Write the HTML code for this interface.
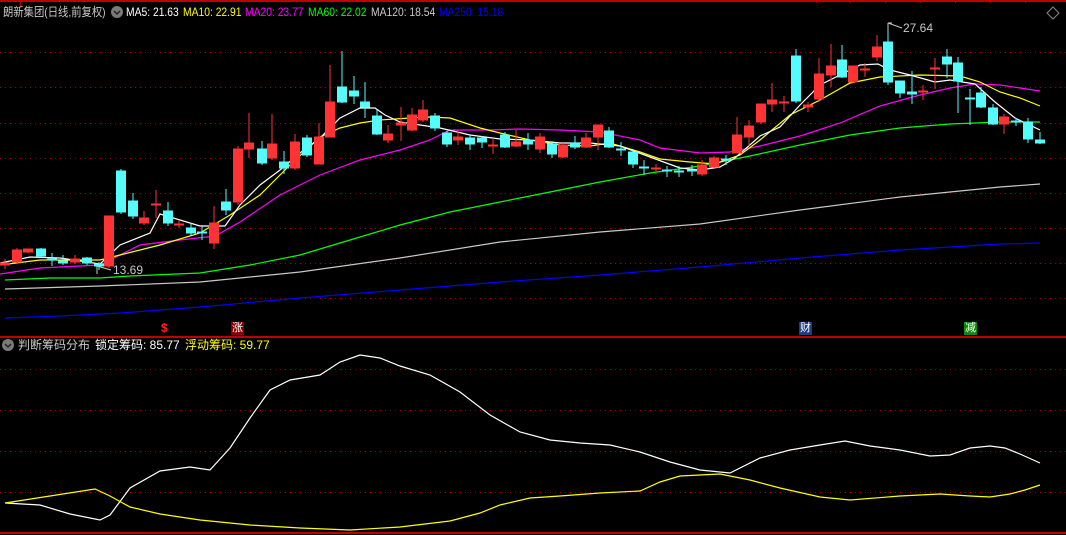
<!DOCTYPE html>
<html><head><meta charset="utf-8"><style>
html,body{margin:0;padding:0;background:#000;}
body{width:1066px;height:535px;overflow:hidden;position:relative;font-family:"Liberation Sans","Noto Sans CJK SC",sans-serif;}
.t{position:absolute;font-size:12px;line-height:14px;white-space:nowrap;}
.h{transform:scaleX(0.86);transform-origin:0 0;}
.m{position:absolute;font-size:11px;line-height:13px;color:#fff;text-align:center;width:13px;height:13px;}
</style></head><body>
<svg width="1066" height="535" style="position:absolute;left:0;top:0">
<g stroke="#a00000" stroke-width="1" stroke-dasharray="1,4">
<line x1="0" y1="52.5" x2="1066" y2="52.5"/><line x1="0" y1="87.5" x2="1066" y2="87.5"/><line x1="0" y1="123.5" x2="1066" y2="123.5"/><line x1="0" y1="158.5" x2="1066" y2="158.5"/><line x1="0" y1="193.5" x2="1066" y2="193.5"/><line x1="0" y1="228.5" x2="1066" y2="228.5"/><line x1="0" y1="263.5" x2="1066" y2="263.5"/><line x1="0" y1="298.5" x2="1066" y2="298.5"/>
<line x1="0" y1="369.5" x2="1066" y2="369.5"/><line x1="0" y1="410.5" x2="1066" y2="410.5"/><line x1="0" y1="451.5" x2="1066" y2="451.5"/><line x1="0" y1="492.5" x2="1066" y2="492.5"/>
</g>
<g stroke="#c00000" stroke-width="2">
<line x1="0" y1="1" x2="1066" y2="1"/><line x1="0" y1="337" x2="1066" y2="337"/><line x1="0" y1="533" x2="1066" y2="533"/>
</g>
<g stroke="#c00000" stroke-width="1">
<line x1="20.5" y1="0" x2="20.5" y2="7"/><line x1="816.5" y1="0" x2="816.5" y2="3"/><line x1="850.5" y1="0" x2="850.5" y2="3"/><line x1="885.5" y1="0" x2="885.5" y2="3"/><line x1="920.5" y1="0" x2="920.5" y2="3"/><line x1="955.5" y1="0" x2="955.5" y2="3"/><line x1="990.5" y1="0" x2="990.5" y2="3"/><line x1="1025.5" y1="0" x2="1025.5" y2="3"/>
</g>
<g fill="none" stroke-width="1.2">
<polyline stroke="#0000ff" points="5,318 60,316 120,313 200,307 300,298 400,290 500,282 600,275 700,267 800,258 900,250 1000,244 1040,243"/>
<polyline stroke="#c8c8c8" points="5,289 100,286 200,282 300,272 400,258 500,242 600,232 700,224 800,210 900,197 1000,187 1040,184"/>
<polyline stroke="#00ff00" points="5,280 50,278 100,278 130,276 200,273 250,265 300,255 350,240 400,225 450,212 500,202 550,192 600,182 650,173 700,166 750,156 800,145 850,135 900,128 950,124 1000,122 1040,122"/>
<polyline stroke="#ff00ff" points="0,274 40,268 100,265 140,245 180,240 215,236 240,222 280,195 320,175 360,160 400,150 430,140 450,130 490,130 520,129 560,130 600,132 640,140 660,148 700,153 730,152 760,146 800,136 840,123 880,106 920,95 950,88 975,84 1000,85 1040,91"/>
<polyline stroke="#ffff00" points="0,265 40,260 100,260 120,255 160,245 200,233 230,215 260,195 290,165 320,137 340,128 360,123 380,120 410,118 430,117 450,118 480,128 500,133 530,140 560,145 590,146 610,143 640,152 660,159 690,162 715,164 740,155 760,140 790,115 820,100 850,83 880,77 920,75 960,76 980,82 1000,92 1020,98 1040,106"/>
<polyline stroke="#ffffff" points="0,263 30,257 60,258 100,264 120,245 150,233 160,214 200,226 225,226 240,205 260,185 280,170 300,153 320,138 340,118 360,108 375,108 385,115 400,122 420,125 440,128 470,135 500,139 530,140 560,143 590,143 620,146 650,157 680,168 700,170 720,167 735,158 760,136 780,127 800,105 820,85 840,75 860,65 878,64 890,70 910,75 935,82 950,80 975,84 995,102 1015,118 1040,130"/>
<polyline stroke="#ffffff" points="5,503 40,505 70,514 100,520 110,515 130,488 160,471 190,467 210,470 230,448 250,418 270,390 290,380 320,375 340,362 360,355 380,358 400,366 430,375 460,392 490,415 520,432 550,440 580,443 610,445 640,452 670,462 700,470 730,473 760,458 790,450 820,445 845,441 870,446 900,450 930,456 950,455 970,448 990,446 1005,448 1020,454 1040,463"/>
<polyline stroke="#ffff00" points="5,503 50,496 95,489 110,496 130,507 160,514 200,520 250,525 300,528 350,530 400,527 450,521 480,513 500,505 530,498 560,496 600,493 640,491 660,482 680,476 720,474 750,480 780,488 820,497 850,500 900,496 940,494 970,496 990,497 1010,494 1025,490 1040,485"/>
</g>
<g stroke="#ff3333" fill="#ff3333">
<line x1="5" y1="259" x2="5" y2="269"/><rect x="0.5" y="263" width="9" height="2"/>
<line x1="17" y1="248" x2="17" y2="263"/><rect x="12.5" y="250" width="9" height="12"/>
<line x1="28" y1="249" x2="28" y2="253"/><rect x="23.5" y="249" width="9" height="3"/>
<line x1="75" y1="255" x2="75" y2="264"/><rect x="70.5" y="259" width="9" height="3"/>
<line x1="109" y1="216" x2="109" y2="268"/><rect x="104.5" y="216" width="9" height="50"/>
<line x1="144" y1="211" x2="144" y2="225"/><rect x="139.5" y="218" width="9" height="5"/>
<line x1="156" y1="190" x2="156" y2="218"/><rect x="151.5" y="204" width="9" height="1"/>
<line x1="179" y1="220" x2="179" y2="228"/><rect x="174.5" y="224" width="9" height="1"/>
<line x1="214" y1="206" x2="214" y2="249"/><rect x="209.5" y="223" width="9" height="20"/>
<line x1="238" y1="146" x2="238" y2="205"/><rect x="233.5" y="149" width="9" height="53"/>
<line x1="249" y1="113" x2="249" y2="158"/><rect x="244.5" y="143" width="9" height="6"/>
<line x1="272" y1="114" x2="272" y2="160"/><rect x="267.5" y="144" width="9" height="14"/>
<line x1="295" y1="134" x2="295" y2="170"/><rect x="290.5" y="142" width="9" height="26"/>
<line x1="319" y1="123" x2="319" y2="164"/><rect x="314.5" y="137" width="9" height="27"/>
<line x1="330" y1="65" x2="330" y2="137"/><rect x="325.5" y="102" width="9" height="35"/>
<line x1="388" y1="125" x2="388" y2="143"/><rect x="383.5" y="134" width="9" height="6"/>
<line x1="401" y1="107" x2="401" y2="141"/><rect x="396.5" y="123" width="9" height="2"/>
<line x1="412" y1="108" x2="412" y2="131"/><rect x="407.5" y="115" width="9" height="15"/>
<line x1="423" y1="100" x2="423" y2="122"/><rect x="418.5" y="110" width="9" height="10"/>
<line x1="458" y1="130" x2="458" y2="145"/><rect x="453.5" y="137" width="9" height="3"/>
<line x1="493" y1="138" x2="493" y2="154"/><rect x="488.5" y="145" width="9" height="1"/>
<line x1="516" y1="130" x2="516" y2="147"/><rect x="511.5" y="142" width="9" height="4"/>
<line x1="540" y1="133" x2="540" y2="153"/><rect x="535.5" y="137" width="9" height="12"/>
<line x1="563" y1="143" x2="563" y2="158"/><rect x="558.5" y="145" width="9" height="12"/>
<line x1="586" y1="133" x2="586" y2="148"/><rect x="581.5" y="138" width="9" height="9"/>
<line x1="598" y1="125" x2="598" y2="150"/><rect x="593.5" y="125" width="9" height="12"/>
<line x1="656" y1="164" x2="656" y2="174"/><rect x="651.5" y="168" width="9" height="1"/>
<line x1="702" y1="160" x2="702" y2="176"/><rect x="697.5" y="165" width="9" height="9"/>
<line x1="714" y1="156" x2="714" y2="168"/><rect x="709.5" y="158" width="9" height="9"/>
<line x1="737" y1="117" x2="737" y2="153"/><rect x="732.5" y="135" width="9" height="18"/>
<line x1="749" y1="120" x2="749" y2="146"/><rect x="744.5" y="126" width="9" height="11"/>
<line x1="761" y1="104" x2="761" y2="124"/><rect x="756.5" y="104" width="9" height="18"/>
<line x1="772" y1="83" x2="772" y2="112"/><rect x="767.5" y="100" width="9" height="4"/>
<line x1="784" y1="96" x2="784" y2="112"/><rect x="779.5" y="102" width="9" height="1"/>
<line x1="808" y1="102" x2="808" y2="112"/><rect x="803.5" y="105" width="9" height="2"/>
<line x1="819" y1="58" x2="819" y2="102"/><rect x="814.5" y="74" width="9" height="25"/>
<line x1="831" y1="44" x2="831" y2="87"/><rect x="826.5" y="66" width="9" height="9"/>
<line x1="853" y1="66" x2="853" y2="82"/><rect x="848.5" y="66" width="9" height="16"/>
<line x1="865" y1="63" x2="865" y2="77"/><rect x="860.5" y="69" width="9" height="1"/>
<line x1="877" y1="35" x2="877" y2="61"/><rect x="872.5" y="47" width="9" height="10"/>
<line x1="923" y1="85" x2="923" y2="100"/><rect x="918.5" y="91" width="9" height="1"/>
<line x1="935" y1="58" x2="935" y2="89"/><rect x="930.5" y="68" width="9" height="1"/>
<line x1="1004" y1="114" x2="1004" y2="134"/><rect x="999.5" y="117" width="9" height="7"/>
</g>
<g stroke="#54fcfc" fill="#54fcfc">
<line x1="41" y1="248" x2="41" y2="257"/><rect x="36.5" y="249" width="9" height="7"/>
<line x1="52" y1="253" x2="52" y2="266"/><rect x="47.5" y="259" width="9" height="1"/>
<line x1="63" y1="255" x2="63" y2="265"/><rect x="58.5" y="261" width="9" height="2"/>
<line x1="87" y1="257" x2="87" y2="265"/><rect x="82.5" y="258" width="9" height="5"/>
<line x1="99" y1="262" x2="99" y2="270"/><rect x="94.5" y="264" width="9" height="2"/>
<line x1="121" y1="169" x2="121" y2="214"/><rect x="116.5" y="171" width="9" height="41"/>
<line x1="133" y1="193" x2="133" y2="219"/><rect x="128.5" y="201" width="9" height="15"/>
<line x1="168" y1="202" x2="168" y2="226"/><rect x="163.5" y="211" width="9" height="12"/>
<line x1="191" y1="223" x2="191" y2="235"/><rect x="186.5" y="228" width="9" height="5"/>
<line x1="202" y1="225" x2="202" y2="240"/><rect x="197.5" y="232" width="9" height="1"/>
<line x1="226" y1="189" x2="226" y2="215"/><rect x="221.5" y="202" width="9" height="8"/>
<line x1="262" y1="141" x2="262" y2="165"/><rect x="257.5" y="149" width="9" height="14"/>
<line x1="284" y1="151" x2="284" y2="174"/><rect x="279.5" y="162" width="9" height="6"/>
<line x1="307" y1="135" x2="307" y2="157"/><rect x="302.5" y="138" width="9" height="17"/>
<line x1="342" y1="51" x2="342" y2="103"/><rect x="337.5" y="87" width="9" height="15"/>
<line x1="354" y1="76" x2="354" y2="104"/><rect x="349.5" y="91" width="9" height="5"/>
<line x1="365" y1="82" x2="365" y2="118"/><rect x="360.5" y="102" width="9" height="5"/>
<line x1="377" y1="110" x2="377" y2="135"/><rect x="372.5" y="116" width="9" height="18"/>
<line x1="435" y1="113" x2="435" y2="131"/><rect x="430.5" y="116" width="9" height="12"/>
<line x1="447" y1="131" x2="447" y2="147"/><rect x="442.5" y="133" width="9" height="11"/>
<line x1="470" y1="135" x2="470" y2="150"/><rect x="465.5" y="138" width="9" height="6"/>
<line x1="482" y1="136" x2="482" y2="148"/><rect x="477.5" y="138" width="9" height="4"/>
<line x1="505" y1="132" x2="505" y2="148"/><rect x="500.5" y="135" width="9" height="12"/>
<line x1="528" y1="133" x2="528" y2="150"/><rect x="523.5" y="140" width="9" height="4"/>
<line x1="552" y1="141" x2="552" y2="158"/><rect x="547.5" y="144" width="9" height="10"/>
<line x1="575" y1="136" x2="575" y2="149"/><rect x="570.5" y="143" width="9" height="4"/>
<line x1="609" y1="127" x2="609" y2="148"/><rect x="604.5" y="131" width="9" height="16"/>
<line x1="621" y1="142" x2="621" y2="156"/><rect x="616.5" y="149" width="9" height="1"/>
<line x1="633" y1="149" x2="633" y2="168"/><rect x="628.5" y="152" width="9" height="12"/>
<line x1="644" y1="160" x2="644" y2="175"/><rect x="639.5" y="167" width="9" height="1"/>
<line x1="667" y1="166" x2="667" y2="177"/><rect x="662.5" y="170" width="9" height="1"/>
<line x1="679" y1="166" x2="679" y2="177"/><rect x="674.5" y="171" width="9" height="1"/>
<line x1="692" y1="165" x2="692" y2="176"/><rect x="687.5" y="170" width="9" height="1"/>
<line x1="726" y1="155" x2="726" y2="165"/><rect x="721.5" y="159" width="9" height="1"/>
<line x1="796" y1="49" x2="796" y2="103"/><rect x="791.5" y="56" width="9" height="45"/>
<line x1="842" y1="45" x2="842" y2="78"/><rect x="837.5" y="60" width="9" height="17"/>
<line x1="888" y1="24" x2="888" y2="85"/><rect x="883.5" y="42" width="9" height="40"/>
<line x1="900" y1="81" x2="900" y2="98"/><rect x="895.5" y="81" width="9" height="12"/>
<line x1="912" y1="71" x2="912" y2="104"/><rect x="907.5" y="92" width="9" height="2"/>
<line x1="947" y1="49" x2="947" y2="78"/><rect x="942.5" y="57" width="9" height="7"/>
<line x1="958" y1="57" x2="958" y2="113"/><rect x="953.5" y="63" width="9" height="18"/>
<line x1="970" y1="89" x2="970" y2="125"/><rect x="965.5" y="98" width="9" height="1"/>
<line x1="981" y1="87" x2="981" y2="108"/><rect x="976.5" y="93" width="9" height="14"/>
<line x1="993" y1="104" x2="993" y2="125"/><rect x="988.5" y="108" width="9" height="16"/>
<line x1="1016" y1="118" x2="1016" y2="126"/><rect x="1011.5" y="121" width="9" height="1"/>
<line x1="1028" y1="118" x2="1028" y2="143"/><rect x="1023.5" y="122" width="9" height="17"/>
<line x1="1040" y1="132" x2="1040" y2="144"/><rect x="1035.5" y="140" width="9" height="3"/>
</g>
<path d="M1053 7 L1059 13 L1053 19 L1047 13 Z" fill="none" stroke="#888" stroke-width="1"/>
<g stroke="#ccc" fill="none" stroke-width="1">
<path d="M97 266 L111 270 M97 266 L97 274"/>
<path d="M888 23 L902 28 M888 23 L888 30 M888 23 L892 23"/>
</g>
<circle cx="117" cy="12" r="6" fill="#7a7a7a"/><path d="M114 11 L117 14 L120 11" stroke="#222" fill="none" stroke-width="1.5"/>
<circle cx="8" cy="345" r="6" fill="#7a7a7a"/><path d="M5 344 L8 347 L11 344" stroke="#222" fill="none" stroke-width="1.5"/>
</svg>
<div class="t h" style="left:3px;top:5px;color:#c8c8c8">朗新集团(日线,前复权)</div>
<div class="t h" style="left:126px;top:5px;color:#fff">MA5: 21.63</div>
<div class="t h" style="left:183px;top:5px;color:#ffff00">MA10: 22.91</div>
<div class="t h" style="left:245px;top:5px;color:#ff00ff">MA20: 23.77</div>
<div class="t h" style="left:308px;top:5px;color:#00ff00">MA60: 22.02</div>
<div class="t h" style="left:371px;top:5px;color:#c8c8c8">MA120: 18.54</div>
<div class="t h" style="left:439px;top:5px;color:#0000ff">MA250: 15.18</div>
<div class="t" style="left:113px;top:263px;color:#c8c8c8">13.69</div>
<div class="t" style="left:903px;top:21px;color:#c8c8c8">27.64</div>
<div class="t" style="left:18px;top:338px;color:#c8c8c8">判断筹码分布</div>
<div class="t" style="left:95px;top:338px;color:#fff">锁定筹码: 85.77</div>
<div class="t" style="left:185px;top:338px;color:#ffff00">浮动筹码: 59.77</div>
<div class="t" style="left:161px;top:321px;color:#ff2020;font-weight:bold">$</div>
<div class="m" style="left:231px;top:322px;background:#8b0000">涨</div>
<div class="m" style="left:799px;top:322px;background:#1a3f8a">财</div>
<div class="m" style="left:964px;top:322px;background:#0a8a0a">减</div>
</body></html>
